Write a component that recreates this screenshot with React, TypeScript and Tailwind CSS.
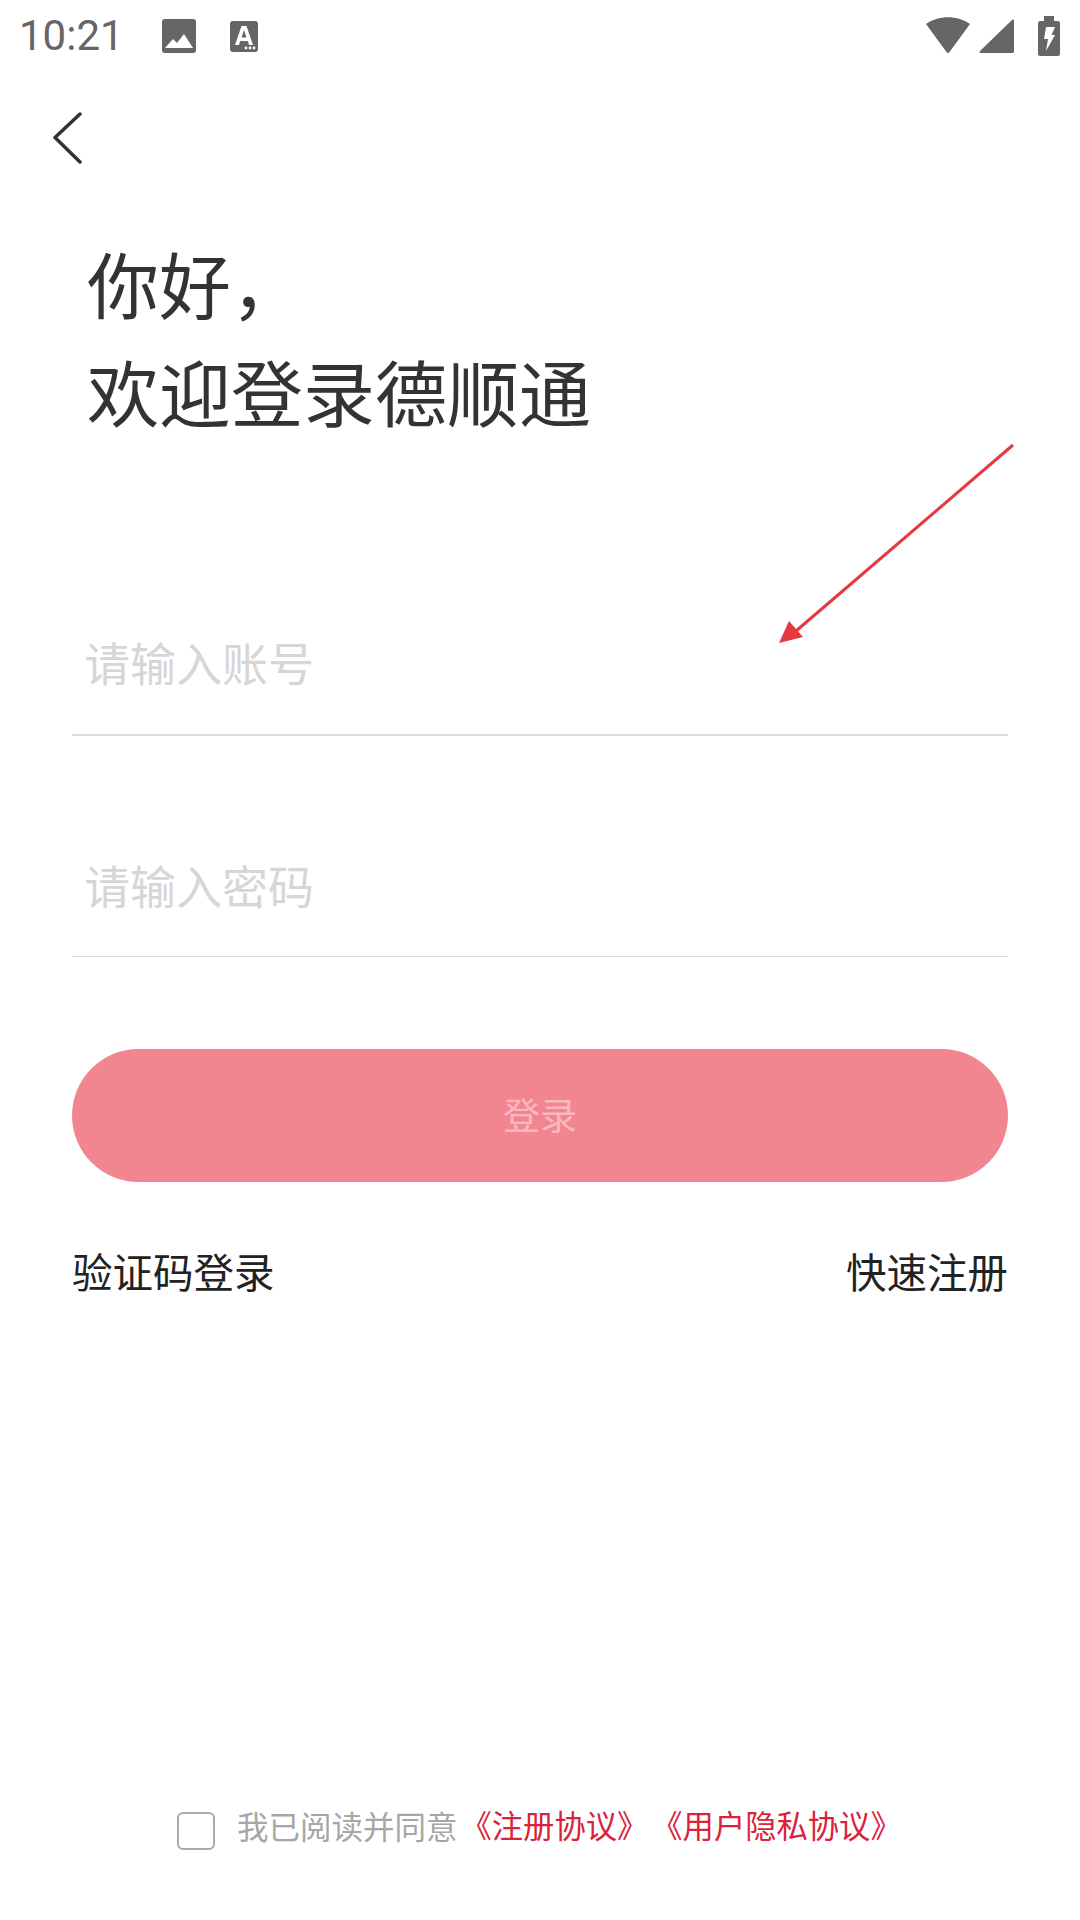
import React from "react";

const cjk = "font-['Noto_Sans_CJK_SC','Noto_Sans',sans-serif]";

function Field({ label, lineClass, mt, pb }: { label: string; lineClass: string; mt: string; pb: string }) {
  return (
    <div className={`${mt} ${pb} flex h-[134px] items-center ${lineClass} pl-[12px]`}>
      <span className="text-[46px] leading-[60px] text-[#d6d6d6]">{label}</span>
    </div>
  );
}

export default function App() {
  return (
    <div className={`relative flex h-[1920px] w-[1080px] flex-col overflow-hidden bg-white ${cjk}`}>
      <div className="flex h-[70px] items-center pl-[19px] pr-[20px] pt-[2px] text-[#666666]">
        <span className="w-[100px] font-['Roboto',sans-serif] text-[42px] leading-[70px]">10:21</span>
        <svg className="ml-[42px]" width="36" height="36" viewBox="0 0 36 36">
          <rect x="1" y="1" width="34" height="34" rx="3" fill="#666666" />
          <path d="M4 30 L12 21 L16 25 L23 16 L32 30 Z" fill="#fff" />
        </svg>
        <svg className="ml-[32px]" width="30" height="32" viewBox="0 0 30 32">
          <rect x="1" y="1" width="28" height="31" rx="3" fill="#666666" />
          <path d="M6 25 L12.500 6 H17.500 L24 25 H20 L18.800 21 H11.200 L10 25 Z M12.500 17.500 H17.500 L15 10 Z" fill="#fff" fillRule="evenodd" />
          <circle cx="17" cy="28" r="1.400" fill="#fff" />
          <circle cx="21" cy="28" r="1.400" fill="#fff" />
          <circle cx="25" cy="28" r="1.400" fill="#fff" />
        </svg>
        <div className="flex-1" />
        <svg width="46" height="38" viewBox="0 0 46 38">
          <path d="M1 7 C13 -2 33 -2 45 7 L24.500 35 C23.500 36.500 22.500 36.500 21.500 35 Z" fill="#666666" />
        </svg>
        <svg className="ml-[8px]" width="36" height="36" viewBox="0 0 36 36">
          <path d="M1 33 L33 2 C34.500 1 35 2 35 3 V33 C35 34.500 34.500 35 33 35 H2 C0.500 35 0 34 1 33 Z" fill="#666666" />
        </svg>
        <svg className="ml-[23px]" width="22" height="40" viewBox="0 0 22 40">
          <path d="M6 0 H16 V5 H20 C21 5 22 6 22 7 V38 C22 39 21 40 20 40 H2 C1 40 0 39 0 38 V7 C0 6 1 5 2 5 H6 Z" fill="#666666" />
          <path d="M8 11 H17 L13.500 19 H17 L8 35 L10 23 H6 Z" fill="#fff" />
        </svg>
      </div>

      <div className="mt-[34px] flex h-[68px] items-center pl-[52px]">
        <svg width="30" height="52" viewBox="0 0 30 52" fill="none">
          <path d="M28 2 L3 25.500 L28 50" stroke="#333333" strokeWidth="3.500" strokeLinecap="round" strokeLinejoin="round" />
        </svg>
      </div>

      <h1 className="ml-[87px] mt-[56px] text-[72px] font-normal leading-[108px] text-[#333333]">
        你好，
        <br />
        欢迎登录德顺通
      </h1>

      <div className="mx-[72px] flex flex-col">
        <Field label="请输入账号" lineClass="border-b-2 border-[#d9d9d9]" mt="mt-[158px]" pb="pb-[14px]" />
        <Field label="请输入密码" lineClass="border-b border-[#dddddd]" mt="mt-[87px]" pb="pb-[11px]" />
        <button className="mt-[92px] flex h-[133px] items-center justify-center rounded-full bg-[#f28690] pb-[2px] text-[37px] text-[#f9b8be]">
          登录
        </button>
        <div className="mt-[62px] flex items-center justify-between text-[40.500px] leading-[54px] text-[#222222]">
          <span>验证码登录</span>
          <span>快速注册</span>
        </div>
      </div>

      <div className="mt-auto mb-[70px] ml-[177px] flex items-center">
        <span className="mt-[13px] h-[38px] w-[38px] rounded-[6px] border-2 border-[#aaaaaa]" />
        <span className="ml-[22px] text-[31.500px] leading-[44px] text-[#a6a6a6]">我已阅读并同意</span>
        <span className="ml-[3px] text-[31.300px] leading-[44px] text-[#d9233c]">《注册协议》</span>
        <span className="ml-[3px] text-[31.300px] leading-[44px] text-[#d9233c]">《用户隐私协议》</span>
      </div>

      <svg className="absolute left-[770px] top-[436px]" width="260" height="216" viewBox="0 0 260 216" fill="none">
        <path d="M243 9 L26 195" stroke="#e5383f" strokeWidth="3" />
        <path d="M9 207 L19 185 L33 201 Z" fill="#e5383f" />
      </svg>
    </div>
  );
}
